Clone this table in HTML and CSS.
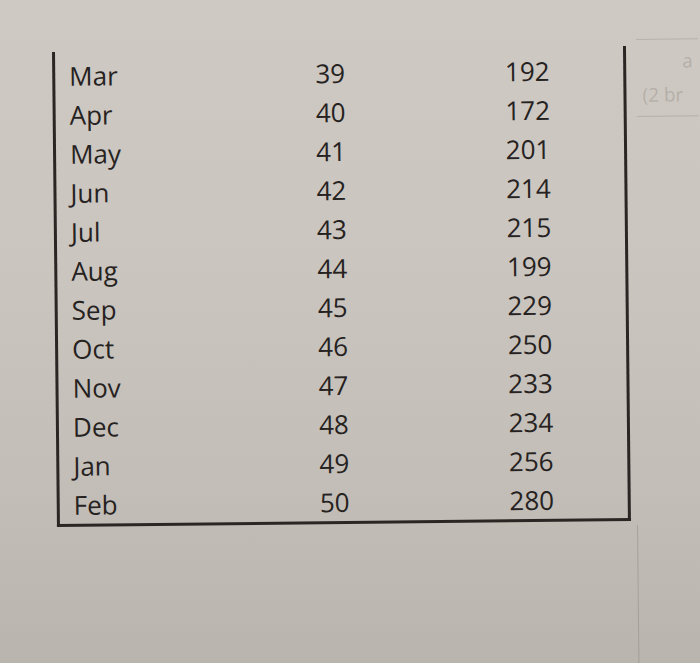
FILE: index.html
```html
<!DOCTYPE html>
<html>
<head>
<meta charset="utf-8">
<link rel="stylesheet" href="styles.css">
</head>
<body>
<div class="paper">
  <div class="sheet">
    <div class="table">
      <div class="row"><span class="m">Mar</span><span class="a">39</span><span class="b">192</span></div>
      <div class="row"><span class="m">Apr</span><span class="a">40</span><span class="b">172</span></div>
      <div class="row"><span class="m">May</span><span class="a">41</span><span class="b">201</span></div>
      <div class="row"><span class="m">Jun</span><span class="a">42</span><span class="b">214</span></div>
      <div class="row"><span class="m">Jul</span><span class="a">43</span><span class="b">215</span></div>
      <div class="row"><span class="m">Aug</span><span class="a">44</span><span class="b">199</span></div>
      <div class="row"><span class="m">Sep</span><span class="a">45</span><span class="b">229</span></div>
      <div class="row"><span class="m">Oct</span><span class="a">46</span><span class="b">250</span></div>
      <div class="row"><span class="m">Nov</span><span class="a">47</span><span class="b">233</span></div>
      <div class="row"><span class="m">Dec</span><span class="a">48</span><span class="b">234</span></div>
      <div class="row"><span class="m">Jan</span><span class="a">49</span><span class="b">256</span></div>
      <div class="row last"><span class="m">Feb</span><span class="a">50</span><span class="b">280</span></div>
    </div>
    <div class="ghost-note"><span class="ghost-top">a</span><span class="ghost-text">(2 br</span></div>
    <div class="ghost-line"></div>
  </div>
</div>
</body>
</html>
```
FILE: styles.css
```css
html, body {
  margin: 0;
  padding: 0;
}
body {
  width: 700px;
  height: 663px;
  overflow: hidden;
  background: #c6c1ba;
}
.paper {
  width: 700px;
  height: 663px;
  background: linear-gradient(180deg, #cec9c3 0%, #cac5be 40%, #c2bdb6 75%, #b9b4ad 100%);
  font-family: "Open Sans", "Liberation Sans", sans-serif;
  color: #26221f;
}
.sheet {
  position: relative;
  width: 700px;
  height: 663px;
  transform: rotate(-0.6deg);
  transform-origin: 340px 50px;
}
.table {
  position: absolute;
  left: 52px;
  top: 49px;
  width: 568px;
  padding-top: 5px;
  border-left: 3px solid #2b2624;
  border-right: 3px solid #2b2624;
  border-bottom: 3px solid #2b2624;
}
.row {
  display: grid;
  grid-template-columns: 200px 150px 47px 150px;
  height: 39px;
  line-height: 39px;
  font-size: 26px;
}
.row.last {
  height: 38px;
}
.m {
  padding-left: 14px;
}
.a {
  text-align: center;
}
.b {
  grid-column: 4;
  text-align: center;
}
.ghost-note {
  position: absolute;
  left: 636px;
  top: 42px;
  width: 62px;
  height: 76px;
  border-top: 1px solid rgba(150, 145, 138, 0.4);
  border-bottom: 1px solid rgba(150, 145, 138, 0.4);
  color: rgba(120, 114, 108, 0.3);
  font-size: 19px;
}
.ghost-top {
  position: absolute;
  left: 46px;
  top: 8px;
}
.ghost-text {
  position: absolute;
  left: 6px;
  top: 42px;
}
.ghost-line {
  position: absolute;
  left: 632px;
  top: 528px;
  width: 1px;
  height: 140px;
  background: rgba(140, 134, 127, 0.45);
}
```
